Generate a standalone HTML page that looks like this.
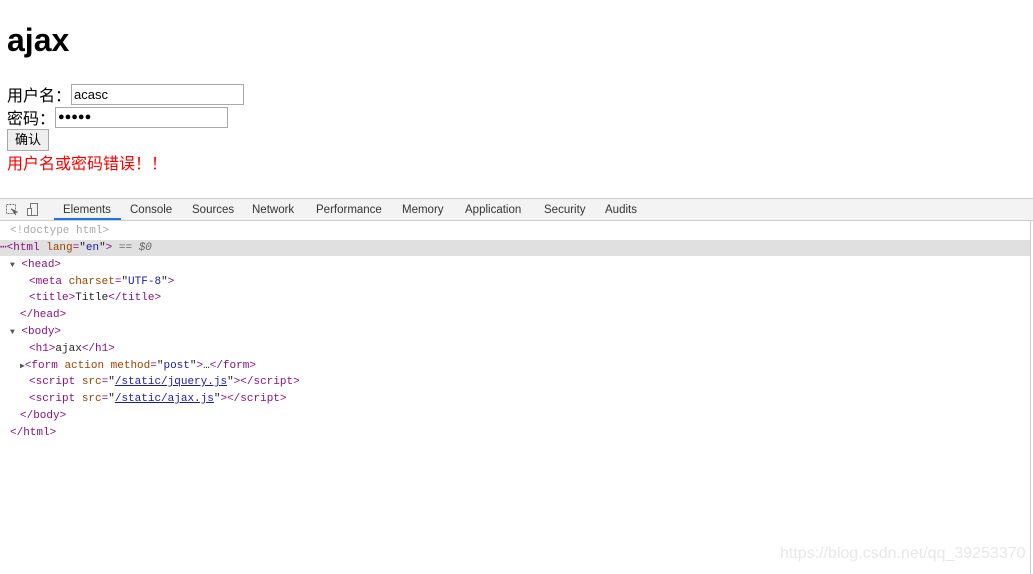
<!DOCTYPE html>
<html><head><meta charset="utf-8"><style>
body{margin:0;width:1033px;height:574px;overflow:hidden;background:#fff;font-family:"Liberation Sans","Noto Sans CJK SC",sans-serif;position:relative}
.a{position:absolute;white-space:nowrap}
.tb{position:absolute;left:0;top:198px;width:1033px;height:21px;background:#f3f3f3;border-top:1px solid #ccc;border-bottom:1px solid #ccc}
.tab{position:absolute;top:5px;font-size:11.5px;color:#333}
.code{position:absolute;left:0;font-family:"Liberation Mono","DejaVu Sans Mono",monospace;font-size:11px;white-space:pre;color:#881280;height:17px;line-height:17px}
.at{color:#994500}.v{color:#1a1aa6}.t{color:#222}.ln{color:#1a1aa6;text-decoration:underline}
</style></head><body>
<div class="a" style="left:7px;top:20px;font-size:32px;font-weight:bold;line-height:40px">ajax</div>
<div class="a" style="left:7px;top:82px;font-size:16px">用户名：</div>
<div class="a" style="left:71px;top:84px;border:1px solid #a9a9a9;font-size:13px;line-height:19px;padding-left:2px;box-sizing:border-box;width:173px;height:21px">acasc</div>
<div class="a" style="left:7px;top:105px;font-size:16px">密码：</div>
<div class="a" style="left:55px;top:107px;width:173px;height:21px;border:1px solid #a9a9a9;box-sizing:border-box;font-size:11px;line-height:18px;padding-left:2px">●●●●●</div>
<div class="a" style="left:7px;top:129px;width:42px;height:22px;border:1px solid #a9a9a9;background:#efefef;box-sizing:border-box;font-size:13px;text-align:center;line-height:20px">确认</div>
<div class="a" style="left:7px;top:150px;font-size:16px;color:#f00">用户名或密码错误！！</div>

<div class="tb">
<svg style="position:absolute;left:6px;top:5px" width="12" height="12"><rect x="0.5" y="0.5" width="9" height="9" fill="none" stroke="#777" stroke-dasharray="2,1"/><path d="M5 5 L11 8 L8 8.5 L10 11" stroke="#555" fill="#555"/></svg>
<svg style="position:absolute;left:27px;top:4px" width="12" height="14"><rect x="3.5" y="0.5" width="7" height="12" fill="none" stroke="#777"/><rect x="0.5" y="5.5" width="4" height="7" fill="#fff" stroke="#777"/></svg>
<div style="position:absolute;left:54px;top:19px;width:67px;height:2px;background:#1a73e8"></div>
<span class="tab" style="left:63px">Elements</span>
<span class="tab" style="left:130px">Console</span>
<span class="tab" style="left:192px">Sources</span>
<span class="tab" style="left:252px">Network</span>
<span class="tab" style="left:316px">Performance</span>
<span class="tab" style="left:402px">Memory</span>
<span class="tab" style="left:465px">Application</span>
<span class="tab" style="left:544px">Security</span>
<span class="tab" style="left:605px">Audits</span>
</div>
<div class="a" style="left:1030px;top:221px;width:1px;height:353px;background:#ccc"></div>
<div class="a" style="left:0;top:240px;width:1030px;height:16px;background:#e0e0e0"></div>

<div class="code" style="top:223px;left:10px;color:#aaa">&lt;!doctype html&gt;</div>
<div class="code" style="top:240px;left:0">⋯&lt;html <span class="at">lang</span>=<span class="t">"</span><span class="v">en</span><span class="t">"</span>&gt; <span style="color:#666">== <i>$0</i></span></div>
<div class="code" style="top:257px;left:10px"><span style="color:#555;font-size:8px">▼</span> &lt;head&gt;</div>
<div class="code" style="top:274px;left:29px">&lt;meta <span class="at">charset</span>=<span class="t">"</span><span class="v">UTF-8</span><span class="t">"</span>&gt;</div>
<div class="code" style="top:290px;left:29px">&lt;title&gt;<span class="t">Title</span>&lt;/title&gt;</div>
<div class="code" style="top:307px;left:20px">&lt;/head&gt;</div>
<div class="code" style="top:324px;left:10px"><span style="color:#555;font-size:8px">▼</span> &lt;body&gt;</div>
<div class="code" style="top:341px;left:29px">&lt;h1&gt;<span class="t">ajax</span>&lt;/h1&gt;</div>
<div class="code" style="top:358px;left:20px"><span style="color:#555;font-size:8px">▶</span>&lt;form <span class="at">action method</span>=<span class="t">"</span><span class="v">post</span><span class="t">"</span>&gt;<span class="t">…</span>&lt;/form&gt;</div>
<div class="code" style="top:374px;left:29px">&lt;script <span class="at">src</span>=<span class="t">"</span><span class="ln">/static/jquery.js</span><span class="t">"</span>&gt;&lt;/script&gt;</div>
<div class="code" style="top:391px;left:29px">&lt;script <span class="at">src</span>=<span class="t">"</span><span class="ln">/static/ajax.js</span><span class="t">"</span>&gt;&lt;/script&gt;</div>
<div class="code" style="top:408px;left:20px">&lt;/body&gt;</div>
<div class="code" style="top:425px;left:10px">&lt;/html&gt;</div>
<div class="a" style="left:780px;top:545px;font-size:16px;color:#e8e8e8">https://blog.csdn.net/qq_39253370</div>
</body></html>
